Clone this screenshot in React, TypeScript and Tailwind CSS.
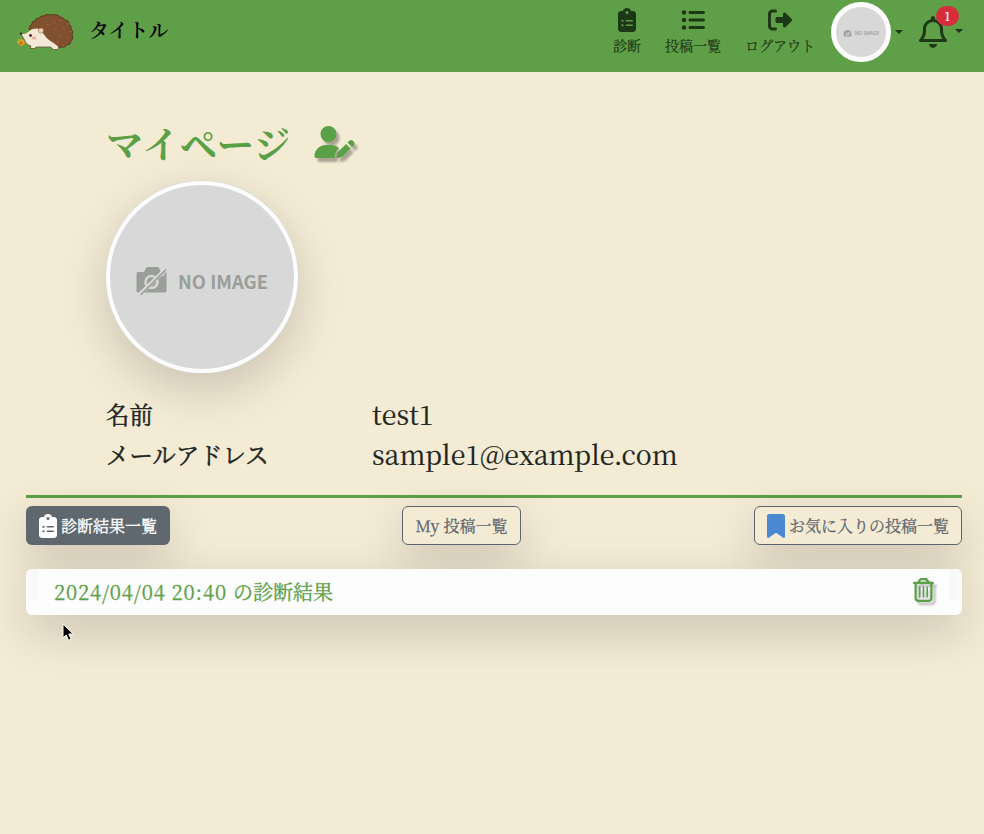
import React from "react";
import {
  FaClipboardList,
  FaListUl,
  FaRightFromBracket,
  FaRegBell,
  FaUserPen,
  FaRegTrashCan,
  FaBookmark,
} from "react-icons/fa6";

function Hedgehog() {
  const dots = [
    [36, 8], [43, 6], [50, 9], [38, 15], [46, 14], [53, 17], [43, 22], [50, 24], [55, 27], [46, 31], [30, 10], [40, 28], [53, 33],
  ];
  return (
    <svg width="60" height="38" viewBox="0 0 60 38" className="shrink-0">
      <path d="M3 25l4 1 1 4-3 2-4-2-1-3z" fill="#d9a520" />
      <circle cx="4" cy="29" r="1.6" fill="#d8642a" />
      <circle cx="2" cy="26" r="1.2" fill="#8fb52c" />
      <path
        d="M12 15l1-3 2-2 0-2 3-1 1-2 3-1 2-2 3 0 2-1.500 3 .5 3-1 3 1 3 0 2 2 3 1 2 2 3 1 1 3 2 2 0 3 2 3-1 3 1 3-2 3-1 3-3 1-2 2-4 0-3 1-17-3z"
        fill="#80502f"
        stroke="#5b3c20"
        strokeWidth="1"
      />
      {dots.map(([x, y], i) => (
        <path key={i} d={`M${x} ${y}l1.5 1`} stroke="#b56b43" strokeWidth="1" />
      ))}
      <path
        d="M3.500 19c2 2 5 1 8-1 2-3 5-3.500 9-3.500 3 1 6 5 8 8 3 4 8 6 12 9.500l1 2-1 1.500h-4l-3-2.500H19l-1 1.500h-5l1-2.500c-4-1-6-4-7-7z"
        fill="#f3e8d8"
      />
      <path d="M3.500 19l3.500 6c1 3 3 6 7 7l-1 2.500h5l1-1.500h14.500l3 2.500h4l1-1.500" fill="none" stroke="#6c5038" strokeWidth=".8" />
      <path d="M21 17c1-4 5-3.500 5.500-1 .3 2-2 4-4 3z" fill="#efcfae" stroke="#8a6244" strokeWidth=".5" />
      <ellipse cx="17" cy="24" rx="2.600" ry="1.800" fill="#eeb5a6" />
      <circle cx="13.500" cy="21.500" r="1.400" fill="#3a2a22" />
      <circle cx="4" cy="19.700" r="1.300" fill="#4a3325" />
    </svg>
  );
}

function NoImageCamera({ className }: { className: string }) {
  return (
    <svg viewBox="0 0 31 28" className={className}>
      <path d="M2 5h6l2-4q.5-1 2-1h9q1.500 0 2 1l2 4h4q1.500 0 1.500 1.500V24q0 1.500-1.500 1.500H2Q.5 25.500.5 24V6.500Q.5 5 2 5z" fill="#9a9e98" />
      <circle cx="15.500" cy="15" r="6" fill="none" stroke="#d8d8d8" strokeWidth="2.400" />
      <path d="M3.500 27.500L30 2" stroke="#d8d8d8" strokeWidth="4" />
      <path d="M11.200 19.300A6 6 0 0 0 19.800 10.700" fill="none" stroke="#d8d8d8" strokeWidth="2" />
      <path d="M4.500 28L30 2.500" stroke="#9a9e98" strokeWidth="1.600" />
      <circle cx="27.500" cy="8" r="1" fill="#d8d8d8" />
    </svg>
  );
}

function Caret() {
  return <span className="block h-0 w-0 border-x-4 border-t-4 border-x-transparent border-t-[#1d3816]" />;
}

function NavItem({ icon, label }: { icon: React.ReactNode; label: string }) {
  return (
    <a className="flex flex-col items-center text-[#1d3816]">
      <span className="flex h-6 items-center">{icon}</span>
      <span className="mt-[3px] text-[14px] leading-[20px] whitespace-nowrap [-webkit-text-stroke:0.2px]">{label}</span>
    </a>
  );
}

export default function App() {
  return (
    <div className="relative h-[834px] w-[984px] overflow-hidden bg-[#f4ebd5] font-['Noto_Serif_CJK_JP','Liberation_Serif','Noto_Sans_CJK_JP',serif] text-[#212521]">
      <header className="flex h-[72px] items-start bg-[#5f9f48]">
        <div className="mt-3.5 ml-[17px]">
          <Hedgehog />
        </div>
        <div className="mt-[15px] ml-3 text-[20px] leading-[30px] font-semibold text-black">タイトル</div>
        <nav className="mt-2 ml-auto flex gap-6">
          <NavItem icon={<FaClipboardList className="h-6 w-[18px]" />} label="診断" />
          <NavItem icon={<FaListUl size={24} />} label="投稿一覧" />
          <NavItem icon={<FaRightFromBracket size={24} />} label="ログアウト" />
        </nav>
        <div className="mt-0.5 ml-4 flex items-center gap-1">
          <div className="flex h-[60px] w-[60px] items-center justify-center gap-[3px] rounded-full border-[5px] border-[#fdfdfd] bg-[#d8d8d8] pt-[3px]">
            <NoImageCamera className="h-[7px] w-[9px]" />
            <span className="font-['Noto_Sans',sans-serif] text-[4.800px] leading-[7px] font-semibold whitespace-nowrap text-[#9a9e98]">NO IMAGE</span>
          </div>
          <Caret />
        </div>
        <div className="mt-4 mr-[21px] ml-4 flex items-center gap-2">
          <div className="relative text-[#1d3816]">
            <FaRegBell className="h-8 w-7" />
            <span className="absolute -top-[10px] left-[17px] flex h-5 w-[23px] items-center justify-center rounded-full bg-[#d62d3a] text-[12px] leading-none font-semibold text-white">
              1
            </span>
          </div>
          <div className="-mt-0.5"><Caret /></div>
        </div>
      </header>

      <main className="pr-[18px] pl-[22px]">
        <section className="px-[84px] pt-[46px]">
          <div className="flex items-center">
            <h1 className="text-[37.2px] leading-[50px] font-bold text-[#5aa046]">マイページ</h1>
            <FaUserPen className="mb-0.5 ml-6 h-8 w-[41px] text-[#5aa046] drop-shadow-[3px_4px_1px_rgba(0,0,0,0.3)]" />
          </div>
          <div className="mt-[13px] h-48 w-48 rounded-full bg-[#fdfdfd] p-1 shadow-[0_0_0_0.5px_#d5dada,0_16px_48px_rgba(0,0,0,0.175)]">
            <div className="flex h-full w-full items-center justify-center gap-[11px] rounded-full bg-[#d8d8d8] pt-2">
              <NoImageCamera className="h-7 w-[31px]" />
              <span className="font-['Noto_Sans_CJK_JP',sans-serif] text-[18.4px] leading-7 font-bold whitespace-nowrap text-[#9a9e98]">NO IMAGE</span>
            </div>
          </div>
          <dl className="mt-[21px] grid grid-cols-[266px_1fr] text-[23.4px] leading-10">
            <dt className="[-webkit-text-stroke:0.5px]">名前</dt>
            <dd className="text-[26.7px] [-webkit-text-stroke:0.2px]">test1</dd>
            <dt className="[-webkit-text-stroke:0.5px]">メールアドレス</dt>
            <dd className="text-[26.7px] [-webkit-text-stroke:0.2px]">sample1@example.com</dd>
          </dl>
        </section>

        <div className="mx-1 mt-[21px] h-[3px] bg-[#5aa046]" />

        <div className="mx-1 mt-2 flex justify-between text-[16px] leading-6 text-[#5c656d]">
          <button className="flex h-[39px] w-[144px] items-center justify-center gap-1 rounded-md bg-[#5f686f] whitespace-nowrap text-white shadow-[0_16px_48px_rgba(0,0,0,0.175)] [-webkit-text-stroke:0.35px]">
            <FaClipboardList className="h-6 w-[18px] shrink-0" />
            診断結果一覧
          </button>
          <button className="-ml-px flex h-[39px] w-[119px] items-center justify-center rounded-md border border-[#5c656d] whitespace-pre shadow-[0_16px_48px_rgba(0,0,0,0.175)] [-webkit-text-stroke:0.25px]">
            My 投稿一覧
          </button>
          <button className="flex h-[39px] w-[208px] items-center justify-center gap-1 rounded-md border border-[#5c656d] whitespace-nowrap shadow-[0_16px_48px_rgba(0,0,0,0.175)] [-webkit-text-stroke:0.25px]">
            <FaBookmark className="h-6 w-[18px] shrink-0 text-[#4a89d2]" />
            お気に入りの投稿一覧
          </button>
        </div>

        <div className="relative mx-1 mt-6 flex h-[46px] items-center justify-between rounded-md bg-[#fdfdfd] shadow-[0_16px_48px_rgba(0,0,0,0.175)]">
          <span className="h-[31px] w-3 self-start rounded-tl-md bg-linear-to-r from-[#fbfbfb] to-[#f7f7f8]" />
          <a className="ml-4 text-[20px] leading-[30px] whitespace-pre text-[#5aa046] [-webkit-text-stroke:0.3px]">
            <span className="tracking-[0.850px]">2024/04/04 20:40 </span>の診断結果
          </a>
          <FaRegTrashCan className="mr-4 mb-1 ml-auto h-6 w-[21px] text-[#5aa046] drop-shadow-[3px_3px_1px_rgba(0,0,0,0.28)]" />
          <span className="h-[31px] w-3 self-start rounded-tr-md bg-linear-to-l from-[#fbfbfb] to-[#f7f7f8]" />
        </div>
      </main>

      <svg className="absolute top-[623px] left-[62px]" width="13" height="19" viewBox="0 0 13 19">
        <path d="M1 1v14l3.200-3 2.300 5.300 2.600-1.100-2.300-5.200h4.500z" fill="#000" stroke="#fff" strokeWidth="1" />
      </svg>
    </div>
  );
}
